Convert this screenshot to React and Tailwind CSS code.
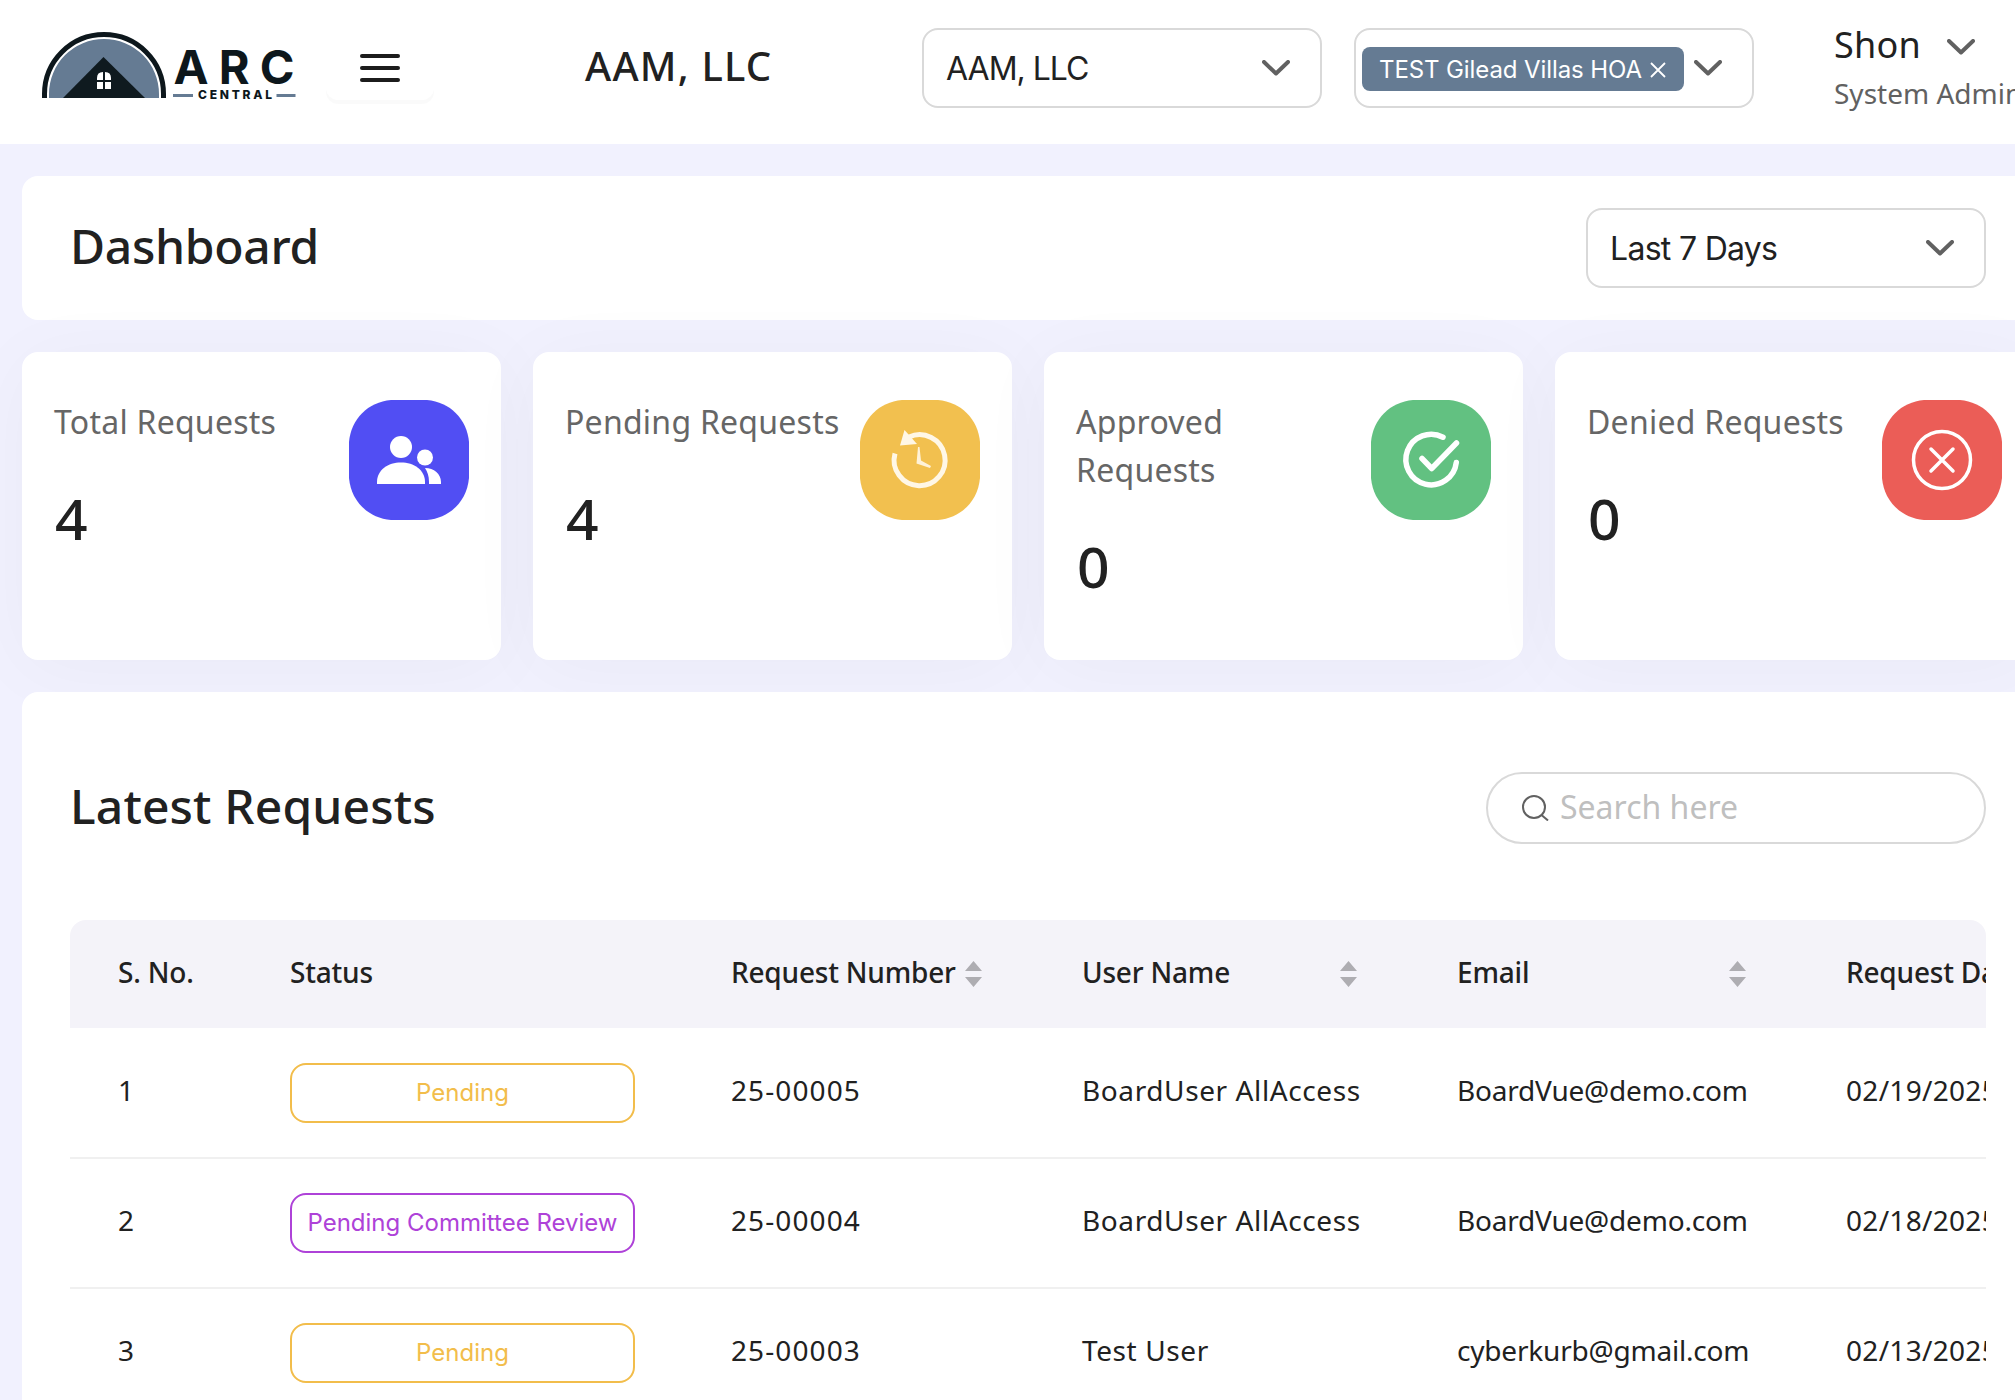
const cards = [
  { label: "Total Requests", value: 4, icon: UsersIcon, color: "text-[#514ef3]" },
  { label: "Pending Requests", value: 4, icon: HistoryIcon, color: "text-[#f2c04f]" },
  { label: "Approved Requests", value: 0, icon: ApprovedIcon, color: "text-[#62c181]" },
  { label: "Denied Requests", value: 0, icon: DeniedIcon, color: "text-[#eb5d57]" },
];

const columns = [
  { title: "S. No.", width: "w-[172px]" },
  { title: "Status", width: "w-[441px]" },
  { title: "Request Number", width: "w-[351px]", sortable: true },
  { title: "User Name", width: "w-[375px]", sortable: true },
  { title: "Email", width: "w-[389px]", sortable: true },
  { title: "Request Date", width: "w-[320px]", sortable: true },
];

const rows = [
  { id: 1, status: "Pending", number: "25-00005", user: "BoardUser AllAccess", email: "BoardVue@demo.com", date: "02/19/2025" },
  { id: 2, status: "Pending Committee Review", number: "25-00004", user: "BoardUser AllAccess", email: "BoardVue@demo.com", date: "02/18/2025" },
  { id: 3, status: "Pending", number: "25-00003", user: "Test User", email: "cyberkurb@gmail.com", date: "02/13/2025" },
];

const statusColors = {
  Pending: "border-[#f2bd4b] text-[#f2bd4b]",
  "Pending Committee Review": "border-[#ae42d8] text-[#ae42d8]",
};

function Logo() {
  return (
    <svg width="256" height="70" viewBox="0 0 256 70" className="shrink-0">
      <path d="M2.500 66V62a59.500 59.500 0 0 1 119 0V66" fill="none" stroke="#0d171c" strokeWidth="5" />
      <path d="M7 66V62a55 55 0 0 1 110 0V66Z" fill="#657b93" />
      <path d="M61.500 25L103 66H21Z" fill="#0f1a1f" />
      <path d="M55 48v-2q0-6 6-6v8zM63 40q6 0 6 6v2h-6zM55 50h6v7h-6zM63 50h6v7h-6z" fill="#fff" />
      <text x="131.500" y="52" textLength="121" className="font-['Inter'] text-[47px] font-bold" fill="#0d171c">
        ARC
      </text>
      <text x="156" y="67" textLength="74" className="font-['Inter'] text-[12px] font-extrabold" fill="#0d171c">
        CENTRAL
      </text>
      <path d="M131 63.500h20M234.500 63.500h19" stroke="#657b93" strokeWidth="3" />
    </svg>
  );
}

function Chevron() {
  return (
    <svg width="28" height="16" viewBox="0 0 28 16" className="shrink-0" fill="none" stroke="#616161" strokeWidth="4">
      <path d="M2 2l12 11.500L26 2" strokeLinecap="round" strokeLinejoin="round" />
    </svg>
  );
}

function SearchIcon() {
  return (
    <svg width="27" height="26" viewBox="0 0 27 26" className="shrink-0" fill="none" stroke="#616161" strokeWidth="2">
      <circle cx="12" cy="12" r="11" />
      <path d="M19.500 20L26 25.500" />
    </svg>
  );
}

function IconTile({ color, children }) {
  return (
    <svg width="120" height="120" viewBox="0 0 120 120" className={`shrink-0 ${color}`}>
      <path d="M42 0H78C101 2 118 19 120 42V78C118 101 101 118 78 120H42C19 118 2 101 0 78V42C2 19 19 2 42 0Z" fill="currentColor" />
      {children}
    </svg>
  );
}

function UsersIcon() {
  return (
    <g fill="#fff">
      <circle cx="52" cy="47" r="11" />
      <circle cx="76" cy="57.500" r="8" />
      <path d="M28 84V82C28 70 39 62.500 52 62.500S76 70 76 82V84Z" />
      <path d="M76 68C85 68 92 74 92 82V84H80V82C80 76 78.500 72 76 68Z" />
    </g>
  );
}

function HistoryIcon() {
  return (
    <g fill="none" stroke="#fff7e6" strokeWidth="5">
      <path d="M35 53.500A25.500 25.500 0 1 0 49 37" />
      <path d="M44.500 30L40 45.500L57 44Z" fill="#fff7e6" stroke="none" />
      <path d="M58 47h1.500l1.500 13.500 10 5.500-1 2-13.500-4.500z" fill="#fff2d8" stroke="none" />
    </g>
  );
}

function ApprovedIcon() {
  return (
    <g fill="none" stroke="#fff" strokeWidth="5.500" strokeLinecap="round" strokeLinejoin="round">
      <path d="M72 37.200A25.300 25.300 0 1 0 85.300 62.500" />
      <path d="M51 58.500L60.700 68.500L85.500 43" />
    </g>
  );
}

function DeniedIcon() {
  return (
    <g fill="none" stroke="#fff" strokeWidth="3.500" strokeLinecap="round">
      <circle cx="60" cy="60" r="28.500" />
      <path d="M49 49L71 71M71 49L49 71" />
    </g>
  );
}

function Sorter() {
  return (
    <svg width="17" height="26" viewBox="0 0 17 26" className="shrink-0" fill="#aeadb2">
      <path d="M8.500 0L17 10H0ZM8.500 26L0 16H17Z" />
    </svg>
  );
}

function Header() {
  return (
    <header className="flex h-36 items-start overflow-hidden bg-white pl-[42px]">
      <div className="shrink-0 pt-8">
        <Logo />
      </div>
      <button className="mt-9 ml-7 flex h-16 w-27 shrink-0 flex-col items-center justify-center gap-2 rounded-xl bg-white shadow-[0_4px_0_rgba(0,0,0,0.02)]">
        <span className="h-1 w-10 rounded-sm bg-[#1c1c1c]" />
        <span className="h-1 w-10 rounded-sm bg-[#1c1c1c]" />
        <span className="h-1 w-10 rounded-sm bg-[#1c1c1c]" />
      </button>
      <h2 className="mt-9 ml-[151px] w-[337px] shrink-0 text-[40px] leading-[60px] font-medium tracking-[1.2px]">AAM, LLC</h2>
      <div className="mt-7 flex h-20 w-[400px] shrink-0 items-center justify-between rounded-2xl border-2 border-[#d9d9d9] pr-[30px] pl-[22px]">
        <span className="pt-0.5 font-['Inter'] text-[32px] tracking-[-1px]">AAM, LLC</span>
        <Chevron />
      </div>
      <div className="mt-7 ml-8 flex h-20 w-[400px] shrink-0 items-center rounded-2xl border-2 border-[#d9d9d9] pl-1.5">
        <span className="mt-0.5 mr-2.5 flex h-11 w-[322px] items-center justify-between rounded-lg bg-[#657b93] pt-px pr-[18px] pl-[17px] font-['Inter'] text-2xl tracking-[-0.1px] whitespace-nowrap text-white">
          TEST Gilead Villas HOA
          <svg width="16" height="16" viewBox="0 0 16 16" stroke="#fff" strokeWidth="1.800">
            <path d="M1 1l14 14M15 1L1 15" />
          </svg>
        </span>
        <Chevron />
      </div>
      <div className="mt-5 ml-20 shrink-0 whitespace-nowrap">
        <div className="flex items-center gap-[26px]">
          <span className="text-4xl leading-[50px] tracking-[0.2px]">Shon</span>
          <span className="pt-1">
            <Chevron />
          </span>
        </div>
        <p className="text-[28px] leading-[46px] text-[#616161]">System Admin</p>
      </div>
    </header>
  );
}

function StatCard({ label, value, icon: Icon, color }) {
  return (
    <div className="flex h-[308px] w-[479px] shrink-0 justify-between rounded-2xl bg-white px-8 pt-12 shadow-[0_8px_80px_rgba(0,0,40,0.035)]">
      <div className="-mt-0.5 max-w-[280px]">
        <p className="text-[32px] leading-[48px] tracking-[0.25px] text-[#666]">{label}</p>
        <p className="mt-7 ml-px text-[57px] leading-[88px] font-medium">{value}</p>
      </div>
      <IconTile color={color}>
        <Icon />
      </IconTile>
    </div>
  );
}

function RequestsTable() {
  return (
    <div className="overflow-hidden rounded-t-2xl">
      <table className="w-[2048px] table-fixed text-left text-[28px]">
        <thead>
          <tr className="h-27 bg-[#f4f3f9]">
            {columns.map((col) => (
              <th key={col.title} className={`${col.width} pr-[52px] pl-12 font-medium whitespace-nowrap`}>
                <div className="flex items-center justify-between">
                  <span className="-mt-1 tracking-[-0.2px]">{col.title}</span>
                  {col.sortable && <Sorter />}
                </div>
              </th>
            ))}
          </tr>
        </thead>
        <tbody>
          {rows.map((row) => (
            <tr key={row.id} className="h-[130px] border-b-2 border-[#f0f0f0] whitespace-nowrap">
              <td className="px-12 pb-1.5">{row.id}</td>
              <td className="px-12">
                <span className={`flex h-15 items-center justify-center rounded-2xl border-2 font-['Inter'] text-2xl ${statusColors[row.status]}`}>
                  {row.status}
                </span>
              </td>
              <td className="px-12 pb-1.5 tracking-[1.1px]">{row.number}</td>
              <td className="px-12 pb-1.5 tracking-[0.6px]">{row.user}</td>
              <td className="px-12 pb-1.5 tracking-[-0.2px]">{row.email}</td>
              <td className="px-12 pb-1.5 tracking-[0.3px]">{row.date}</td>
            </tr>
          ))}
        </tbody>
      </table>
    </div>
  );
}

export default function App() {
  return (
    <div className="h-[1400px] w-[2015px] overflow-hidden bg-[#f1f1fe] font-['Noto_Sans',sans-serif] text-[#212121]">
      <Header />
      <main className="flex w-[2034px] flex-col gap-8 pt-8 pl-[22px]">
        <section className="flex h-36 items-center justify-between rounded-2xl bg-white pr-12 pl-12">
          <h1 className="-mt-1 text-5xl font-medium tracking-[-0.3px]">Dashboard</h1>
          <div className="flex h-20 w-[400px] items-center justify-between rounded-2xl border-2 border-[#d9d9d9] pr-[30px] pl-[22px]">
            <span className="pt-0.5 font-['Inter'] text-[32px] tracking-[-0.7px]">Last 7 Days</span>
            <Chevron />
          </div>
        </section>
        <section className="flex gap-8">
          {cards.map((card) => (
            <StatCard key={card.label} {...card} />
          ))}
        </section>
        <section className="relative h-[760px] rounded-2xl bg-white px-12 pt-20">
          <div className="mb-[76px] flex h-[72px] items-center justify-between">
            <h2 className="-mt-1 text-5xl font-medium tracking-[0.15px]">Latest Requests</h2>
            <div className="flex h-[72px] w-[500px] items-center gap-[11px] rounded-full border-2 border-[#d9d9d9] pl-[34px]">
              <SearchIcon />
              <span className="-mt-0.5 text-[32px] text-[#bfbfbf]">Search here</span>
            </div>
          </div>
          <RequestsTable />
        </section>
      </main>
    </div>
  );
}
